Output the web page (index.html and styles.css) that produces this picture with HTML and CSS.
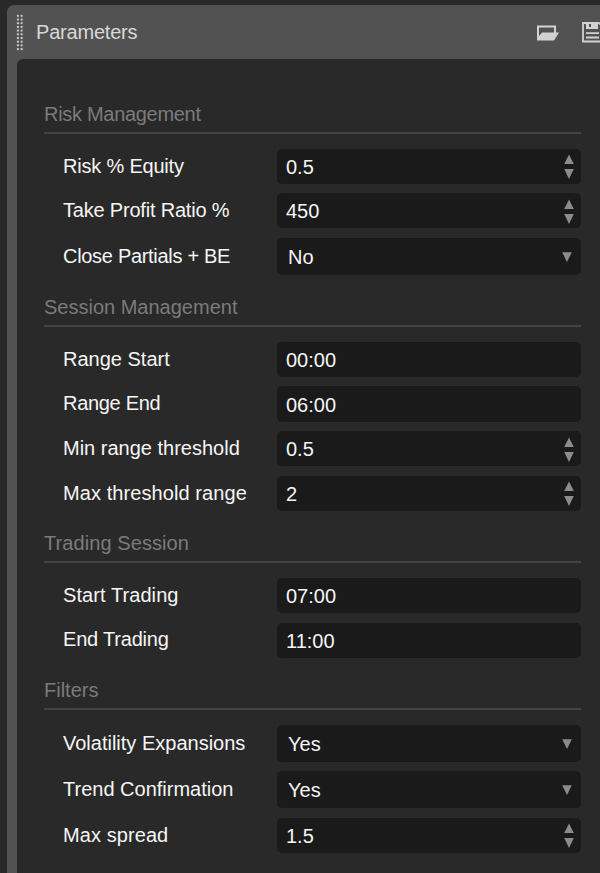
FILE: index.html
```
<!DOCTYPE html>
<html lang="en">

<head>
  <meta charset="UTF-8">
  <meta name="viewport" content="width=device-width, initial-scale=1.0">
  <title>Parameters</title>
  <link rel="stylesheet" href="styles.css">
</head>

<body>
  <svg class="defs" width="0" height="0">
    <symbol id="spin" viewBox="0 0 10 26">
      <path d="M5 0.500L9.800 10H0.200z" />
      <path d="M5 25L9.800 15H0.200z" />
    </symbol>
    <symbol id="drop" viewBox="0 0 10 10">
      <path d="M5 10L9.800 0.200H0.200z" />
    </symbol>
  </svg>

  <div class="window">
    <header class="titlebar">
      <div class="grip"></div>
      <h1>Parameters</h1>
      <svg class="open" width="24" height="18" viewBox="0 0 24 18">
        <path d="M2 15.500V3.500H19V10" fill="none" stroke="#d2d2d2" stroke-width="2" />
        <path d="M1 17.500V15.500L6 9.500H23L18 17.500z" fill="#d2d2d2" />
      </svg>
      <svg class="save" width="22" height="22" viewBox="0 0 22 22">
        <path d="M2 2H18L20.800 4.800V20.500H2z" fill="none" stroke="#d2d2d2" stroke-width="1.800" />
        <path d="M5 1.500H17V8H5zM8 3V6H10V3z" fill="#d2d2d2" fill-rule="evenodd" />
        <path d="M5 12.200H18M5 16.500H18" stroke="#d2d2d2" stroke-width="1.800" />
      </svg>
    </header>

    <main class="panel">
      <section>
        <h2 class="tight">Risk Management</h2>
        <div class="row"><span class="label snug">Risk % Equity</span><div class="field">0.5<svg class="spin"><use href="#spin" /></svg></div></div>
        <div class="row"><span class="label snug">Take Profit Ratio %</span><div class="field">450<svg class="spin"><use href="#spin" /></svg></div></div>
        <div class="row"><span class="label tight">Close Partials + BE</span><div class="field select">No<svg class="drop"><use href="#drop" /></svg></div></div>
      </section>

      <section>
        <h2>Session Management</h2>
        <div class="row"><span class="label">Range Start</span><div class="field">00:00</div></div>
        <div class="row"><span class="label tight">Range End</span><div class="field">06:00</div></div>
        <div class="row"><span class="label">Min range threshold</span><div class="field">0.5<svg class="spin"><use href="#spin" /></svg></div></div>
        <div class="row"><span class="label wide">Max threshold range</span><div class="field">2<svg class="spin"><use href="#spin" /></svg></div></div>
      </section>

      <section>
        <h2 class="wide">Trading Session</h2>
        <div class="row"><span class="label wide">Start Trading</span><div class="field">07:00</div></div>
        <div class="row"><span class="label snug">End Trading</span><div class="field">11:00</div></div>
      </section>

      <section>
        <h2>Filters</h2>
        <div class="row"><span class="label">Volatility Expansions</span><div class="field select">Yes<svg class="drop"><use href="#drop" /></svg></div></div>
        <div class="row"><span class="label">Trend Confirmation</span><div class="field select">Yes<svg class="drop"><use href="#drop" /></svg></div></div>
        <div class="row"><span class="label wide">Max spread</span><div class="field">1.5<svg class="spin"><use href="#spin" /></svg></div></div>
      </section>
    </main>
  </div>
</body>

</html>
```
FILE: styles.css
```
* {
  box-sizing: border-box;
}

html,
body {
  height: 100%;
  overflow: hidden;
}

body {
  margin: 0;
  padding: 5px 0 0 7px;
  background-color: #292929;
  color: #f6f6f6;
  font-family: 'Liberation Sans', Arial, sans-serif;
  font-size: 20px;
}

h1,
h2 {
  margin: 0;
  font-size: 20px;
  font-weight: normal;
}

.defs {
  display: block;
  height: 0;
}

.window {
  height: 868px;
  padding-left: 10px;
  background-color: #525252;
  border-top-left-radius: 7px;
}

.titlebar {
  display: flex;
  align-items: center;
  height: 54px;
}

.grip {
  width: 7.500px;
  height: 37px;
  margin: 0 12.500px 0 -1px;
  background-image: radial-gradient(circle, #d0d0d0 0.9px, transparent 1.5px);
  background-size: 3.750px 3.700px;
}

h1 {
  flex: 1;
  color: #d8d8d8;
  letter-spacing: -0.2px;
}

.open {
  flex: none;
  margin-right: 21px;
}

.save {
  flex: none;
  margin-right: -3px;
}

.panel {
  height: 814px;
  padding: 22.600px 19px 0 27px;
  background-color: #292929;
  border-top-left-radius: 6px;
}

h2 {
  height: 52px;
  margin-bottom: 15px;
  padding-top: 21.200px;
  border-bottom: 2px solid #444;
  color: #7b7b7b;
  line-height: 23px;
}

.row {
  display: flex;
  align-items: center;
  padding-left: 19px;
}

.row + .row {
  margin-top: 9.450px;
}

.label {
  width: 214px;
  padding-bottom: 0.300px;
  white-space: nowrap;
}

.tight {
  letter-spacing: -0.3px;
}

.snug {
  letter-spacing: -0.2px;
}

.wide {
  letter-spacing: 0.080px;
}

.field {
  display: flex;
  align-items: center;
  flex: 1;
  height: 35.200px;
  padding: 2px 7px 0 9px;
  border-radius: 5px;
  background-color: #1a1a1a;
}

.select {
  height: 37px;
  padding: 1.600px 9px 0 11px;
}

.spin,
.drop {
  width: 10px;
  height: 26px;
  margin-left: auto;
  fill: #8c8c8c;
}

.drop {
  height: 10px;
}
```
